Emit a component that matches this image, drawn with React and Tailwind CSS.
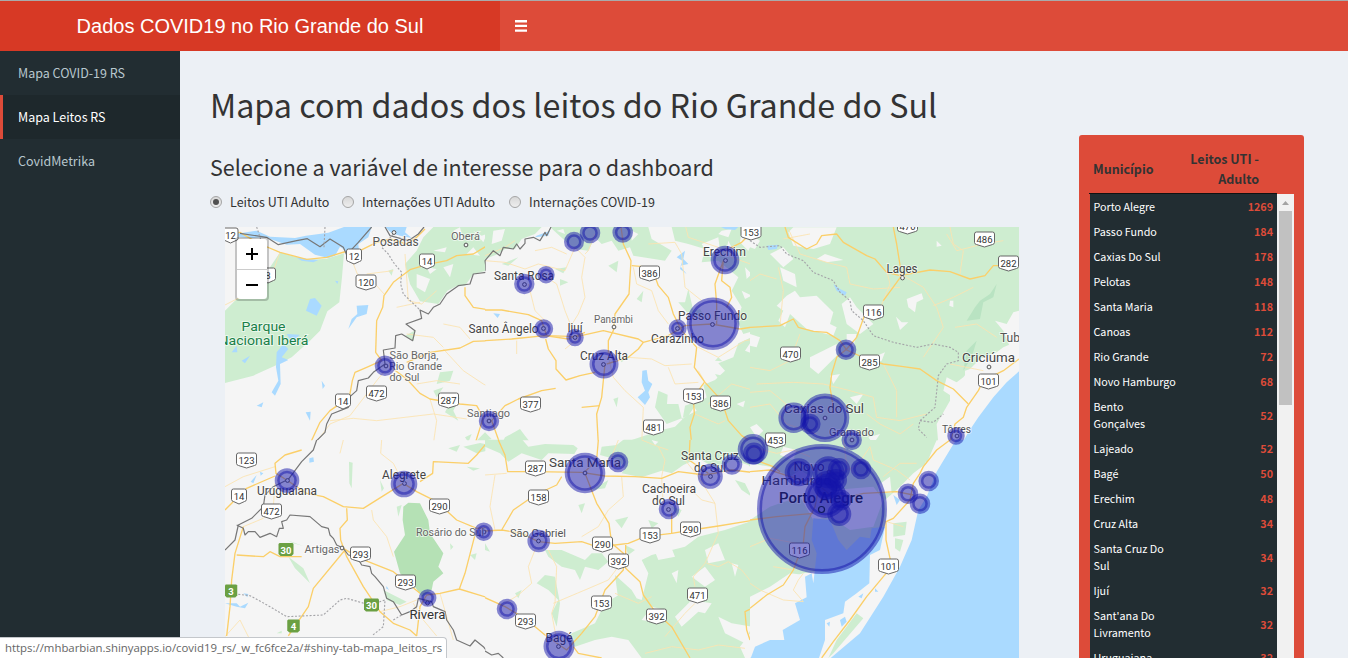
import React from "react";

const municipalities = [
  [["Porto Alegre"], 1269],
  [["Passo Fundo"], 184],
  [["Caxias Do Sul"], 178],
  [["Pelotas"], 148],
  [["Santa Maria"], 118],
  [["Canoas"], 112],
  [["Rio Grande"], 72],
  [["Novo Hamburgo"], 68],
  [["Bento", "Gonçalves"], 52],
  [["Lajeado"], 52],
  [["Bagé"], 50],
  [["Erechim"], 48],
  [["Cruz Alta"], 34],
  [["Santa Cruz Do", "Sul"], 34],
  [["Ijuí"], 32],
  [["Sant'ana Do", "Livramento"], 32],
  [["Uruguaiana"], 32],
];

// Terrain sheets: each one is drawn at three times the map scale.
const sheets = [
  {
    x: 220,
    y: 224,
    park: [
      "M180 85L260 108L320 104L372 88L366 160L358 235L322 262L300 320L270 350L215 400L165 425L100 455L15 477V260L60 215L150 130Z",
      "M640 9H810V98L795 112L798 140L760 150L735 185L710 186L682 200L655 240L600 232L570 180L555 120L590 80L610 40Z",
      "M556 335L587 318L580 352ZM660 445L700 440L690 470L650 480ZM680 555L720 520L700 560L715 590L675 565ZM640 500L670 490L650 520ZM735 640L755 630L745 655ZM765 655L795 625L810 635V660ZM505 140L520 135L515 155Z",
    ],
    land: [
      "M700 20L720 10L730 50L710 45ZM640 80L680 70L675 85ZM740 90L760 70L780 95ZM590 150L630 165L615 205L590 190ZM670 130L700 120L690 160ZM620 130L650 135L630 150ZM760 20L785 35L800 30L790 55Z",
    ],
    water: [
      "M15 20L60 28L110 20L150 38L225 42L258 35L325 26L372 9H455L445 40L415 60L418 90L378 92L370 75L360 68L345 95L325 102L285 92L240 60L200 62L135 40L90 42L50 38L15 28Z",
      "M495 9H560L555 25L575 42L540 35L515 28Z",
      "M228 100L265 105L295 108L280 115L245 110ZM270 225L285 222L305 245L290 275L258 260ZM410 245L445 243L440 270L410 280L385 315L395 285L412 270ZM170 385L190 360L205 375L185 400L205 408L180 420L182 480L165 515L155 505L175 470L168 430ZM65 410L90 395L75 418ZM110 545L130 535L125 550ZM257 565L272 563L270 590ZM305 470L315 485L308 495ZM200 330L240 332L215 355ZM345 170L355 172L352 180ZM35 385L50 365L52 385Z",
    ],
    roads: [
      "M15 30L60 25L120 60L180 85L260 106L320 100L372 84L420 80L470 55L510 45L560 60L590 40L615 15",
      "M810 60L760 90L710 95L680 110L620 122L570 137L520 175L492 215L488 250L470 290L467 385L485 410L440 430L405 445L397 470L388 520L330 560L300 595L270 660",
      "M560 415L630 385L720 372L760 352L810 350",
      "M520 435L560 465L600 508L630 525L720 540L770 545L790 580L765 660",
      "M735 190L735 215L760 250L810 258",
    ],
    tracks: [
      "M400 120L412 150L470 185L492 210M180 85L160 140L100 200L15 243M495 440L470 470L440 510L390 575L330 600L300 640M555 90L565 230L605 240L650 200M330 590L400 583L470 590L640 570L740 585M630 525L650 590L640 660M560 330L640 340L670 370M670 300L720 310L750 345M670 375L730 440L790 480L810 490M530 250L600 235M440 150L520 140M590 480L650 470L720 480",
    ],
    border: [
      "M60 28L140 40L175 62L230 50L262 44L300 68L330 45L370 70L380 92L415 55L455 9",
      "M495 9L510 35L565 50L595 30L612 9",
      "M810 100L795 110L800 145L760 150L750 180L715 185L680 210L660 240L640 250L625 270L600 258L605 283L558 300L585 320L578 350L545 330L527 335L525 372L490 378L495 420L460 445L445 462L415 470L410 500L390 518L385 550L335 570L320 600L315 625L290 650L285 660",
    ],
    dashed: ["M315 9L312 70M110 9L125 55M520 30L485 70L505 90L520 115L545 145L542 180L550 210L600 258"],
  },
  {
    x: 485,
    y: 224,
    park: [
      "M195 9H490L500 45L560 80L540 110L445 95L435 70L400 80L380 50L350 60L330 40L310 80L270 75L240 50Z",
      "M0 9H170L150 30L110 45L90 75L60 75L40 90L0 105Z",
      "M560 9H810V320L775 330L755 290L770 250L740 200L760 160L700 110L650 115L660 75L610 60L570 50Z",
      "M810 335L760 358L745 400L700 418L720 440L690 468L655 483L665 520L625 545L635 560L600 578L570 608L530 618L440 648L430 680H810Z",
      "M520 500L548 512L546 540L580 540L592 590L600 545L640 530L610 575L545 600L510 550ZM610 195L625 260L645 255L660 280L610 270L580 235L600 235Z",
      "M50 120L100 100L70 125ZM210 135L245 130L235 148ZM225 165L250 175L225 185ZM370 125L400 110L395 145ZM455 225L475 200L470 235ZM60 640L105 615L120 635L140 660H50ZM0 625L20 645L0 650ZM400 400L420 405L410 415ZM385 525L400 520L395 550ZM690 450L712 455L700 465ZM690 410L700 400L712 412Z",
    ],
    land: [
      "M650 60L700 40L705 80L670 90ZM770 20L800 60L790 80L765 55ZM730 50L750 90L720 100ZM780 130L800 150L785 165ZM770 200L800 215L780 225ZM710 20L740 15L730 40L700 30ZM780 380L800 350L805 390ZM755 540L780 530L775 550ZM25 20L60 15L50 50L20 60ZM440 20L460 30L440 50ZM215 20L235 15L240 30Z",
    ],
    water: [
      "M575 100L600 80L595 105L610 120L585 125L605 150L585 135L592 110ZM472 440L485 438L490 470L502 480L490 505L495 520L480 543L458 520L480 500L470 475ZM25 268L45 270L38 282ZM708 9H760L750 18L720 15ZM110 75L150 40L190 35L195 20L155 35Z",
    ],
    roads: [
      "M408 9L415 60L438 110L432 210L390 270L385 320L370 350V390",
      "M0 258H50L130 272L170 290L185 335L275 338L355 320L460 345L475 355L550 335L600 305L680 300L765 315L810 308",
      "M0 350L80 345L180 335L250 345L300 325",
      "M475 355L460 375L430 400L365 420M360 420L350 520L335 570L340 660",
      "M440 125L500 130L520 185L550 220L565 270L590 320L635 370L628 430L660 475L710 530L730 590L770 635L810 660",
      "M658 475L625 520L628 570L615 610L620 660",
      "M182 345L190 375L213 410V435L243 468L285 455L330 445M212 493L170 500L100 525L60 545L20 590L45 660M290 550L345 545",
      "M695 300V240L690 180L715 110L710 170L735 190L740 220L725 250M720 80L770 55L800 25",
    ],
    tracks: [
      "M0 110L60 115L120 135L160 120L240 140L270 70L300 100L290 160L300 220L280 270L255 310M185 160L215 180L240 260L260 310M150 80L200 70L245 90M330 30L310 80L300 90M490 60L570 55L590 90L600 190L650 230M445 130L455 180L500 200L520 260L550 300M370 400L385 460L420 500L475 550L470 660M430 400L500 405L540 425L620 420M95 350V390M240 375L290 335M0 95L60 70L90 50M130 180L150 260L190 300M600 0L610 40L700 70L740 100L810 125M640 370L700 400L780 350L810 345M550 430L570 480L640 475M660 475L640 440M670 540L740 480L810 500M630 570L700 600L720 590",
    ],
    border: ["M0 140V110L25 80L45 95L55 70L85 75L95 60L105 75L120 58V45L145 40L165 50L180 25L185 35L198 9"],
    dashed: [],
  },
  {
    x: 750,
    y: 224,
    park: ["M0 9H807V350L760 370L740 385L690 405L660 435L640 460L600 490L600 530L560 600L565 660H0Z"],
    land: [
      "M115 25L130 10H260L240 60L190 75L130 65ZM60 90L100 70L130 105L100 130ZM200 105L225 90L280 108L230 115ZM110 215L135 200L150 220L200 215L250 265L240 300L260 310L250 335L170 315L120 270L105 310L85 290L100 260L80 245ZM90 130L135 150L140 190L100 170ZM275 240L300 220L320 250L370 300L330 330L290 300ZM470 225L515 208L520 225L500 235L495 265L475 250ZM438 278L455 295L475 295L450 318ZM600 230L610 230V250L598 245ZM180 400L260 360L260 395L205 450L180 430ZM0 330L30 340L20 370L0 365ZM560 50L575 65L560 68ZM0 30L30 50L15 75L0 70ZM240 455L270 450L250 480ZM290 330L320 330L310 370L290 350ZM370 400L405 385L395 410L360 420ZM590 460L630 480L610 520L580 500ZM735 290L770 300L790 265L807 260V370L780 370L760 320ZM645 440L690 425L807 375V440L740 500L690 550L640 620L600 660H560L600 590L650 530L680 500L645 490ZM0 610L20 600L40 620L20 640ZM355 640L390 630L370 660ZM300 520L340 510L320 540Z",
    ],
    water: ["M807 442L770 475L730 520L685 580L655 625L635 660H807ZM50 65L85 62L80 75L55 78ZM250 180L270 195L290 205L285 215L260 200Z"],
    roads: [
      "M105 9L115 40L170 75L200 60L215 35L260 30L280 55L350 95L375 105L410 145L450 155L540 138L600 143L660 165L705 155L730 125L807 125",
      "M430 9L440 60L455 155L400 230M345 270L320 340L290 375L260 400L245 450L240 490L250 550",
      "M0 310L90 305L130 285L145 310L190 322L230 325L270 350L290 378L350 405L400 420L460 428L510 435L560 470L610 495L655 540",
      "M807 405L760 440L700 470L685 500L650 550L640 580L615 600L605 640L595 660",
    ],
    tracks: [
      "M115 15L150 90L230 115L290 130L300 180L370 195L450 190M0 170L30 150L80 165M0 430L60 440L120 410L150 330M20 480L130 475L220 480L300 500L370 520L380 580L450 590L530 570M460 155L520 190L560 250L580 310L520 400M615 310L680 300L740 340M550 245L610 220L670 190M90 305L100 200L85 130M410 140L420 180L380 280M0 550L60 540L110 600L200 630M590 30L620 80L700 60L760 50M180 30L100 45M600 9L610 60L640 80L630 150M350 570L390 600L450 630L490 600M400 420L440 500L440 580M700 440L600 420M0 505L60 500L85 520L130 560L200 570",
    ],
    border: [],
    dashed: [
      "M0 50L30 70L90 65L110 90L160 110L190 145L250 170L270 205L300 230L305 260L340 290L370 335L430 355L500 370L550 360L600 370L625 385V410L590 420L565 455L555 550L510 590L505 615L530 640M510 590L550 595L580 570",
    ],
  },
  {
    x: 220,
    y: 440,
    park: [
      "M387 65L398 68L395 145L388 130ZM685 25L720 15L710 35ZM730 20L780 9L810 15V30L770 40ZM530 200L545 195L535 230ZM480 120L492 145L485 155ZM205 350L250 385L270 430L225 385ZM490 450L560 485L540 495L500 480ZM690 310L700 320L692 330ZM750 345L770 340L765 360ZM170 580L185 572V580ZM740 80L780 85L760 92ZM200 300L250 318L220 310ZM800 140L810 135V155Z",
    ],
    land: [],
    water: ["M92 125L110 105L100 130ZM120 95L130 100L122 107ZM268 55L280 52L282 65L268 68ZM70 460L85 462L82 472ZM15 490L50 490L60 500L85 488L75 505L50 500ZM500 438L507 450L498 445Z"],
    roads: [
      "M245 30L195 45L165 70L168 100L200 120L260 160L310 170L370 200L430 205L510 155L550 130L590 155L650 185L710 240L770 265L810 262",
      "M380 205L382 240L360 265L362 300L380 350L430 440L480 515L520 550L570 570L590 588M375 330L280 445L265 500L205 588",
      "M800 9L770 45L745 70L640 65L638 100L600 125M770 265L735 400L718 447L660 460L620 465L600 500L590 588M718 447L810 475M370 325L420 355L520 395L600 460",
      "M165 108L80 145L15 210M70 260L45 340L35 420L30 500L20 588M50 345L130 350L150 335L180 350H245",
    ],
    tracks: [
      "M15 140L70 110L165 80M370 0L360 40M485 0L482 40L520 70L545 120M455 210L460 240L500 290L520 350M70 260L130 235L160 200L165 130M15 590L60 540L90 600M580 490L610 540L650 588M480 515L540 500L590 480M660 460L700 600",
    ],
    border: [
      "M290 0L280 30L245 65L205 118L160 140L135 165L130 200L95 235L55 255L45 300L15 330",
      "M50 255L70 265L75 285L85 275L105 275L120 292L150 280L170 290L178 265L190 265L185 245L200 240L210 225L270 230L305 260L325 265L330 285L340 295L350 315L370 325L385 345L410 350L425 375L450 380L455 400L465 410L490 440L500 475L520 485L545 525L570 515L590 500L595 475L635 485L640 500L675 515L680 540L700 570L710 600L750 618L765 600L790 620L810 645",
    ],
    dashed: ["M55 463L90 467L150 500L200 530L310 525L360 480L380 475L450 495L495 480L490 560L455 588M520 540L545 525"],
  },
  {
    x: 485,
    y: 440,
    park: [
      "M0 -20H95L130 20L180 12L265 15L278 25L268 42L190 40L170 60L110 40L70 65L45 40L0 20Z",
      "M440 -20L395 15L350 20L345 45L400 60L420 85L410 100L470 112L530 92L560 100L595 75L640 55L700 90L740 60L790 75L810 95V-20Z",
      "M180 330H230L300 360L320 340L350 340L370 365L340 390L300 380L285 420L270 390L230 380L190 350ZM155 430L180 405L210 410L225 490L215 560L200 520L220 480L190 450ZM470 360L500 345L600 320L640 290L720 270L810 240V654H470L430 600L380 590L330 600L270 620L240 600L260 580L330 550L360 490L410 460L470 480L490 400ZM390 405L440 450L470 500L490 580L440 560L400 480ZM280 195L300 190L290 220ZM490 240L520 250L500 265ZM390 240L430 230L410 265ZM420 315L450 330L430 345ZM560 200L590 210L580 230ZM90 460L110 450L100 475ZM0 310L15 335L0 330ZM320 150L370 120L360 145ZM750 120L780 130L800 170L770 150Z",
    ],
    land: [
      "M620 410L660 380L690 420L660 440ZM600 500L620 480L680 490L660 520L640 515L590 560L570 530ZM500 500L540 510L530 550L470 540ZM700 530L740 550L800 560L780 610L720 580ZM500 310L550 300L570 350L520 360ZM660 330L700 310L720 360L670 370ZM350 620L400 600L440 654H380ZM765 620L810 560V654H780ZM740 370L760 375L750 410ZM560 400L580 390L575 430ZM500 0L520 5L510 15Z",
    ],
    water: ["M800 630L810 610V654H795Z"],
    roads: [
      "M40 0L60 45L68 95L150 95L290 97L360 108L450 110L530 115L580 95L660 105L740 90L810 98",
      "M230 110L215 135L150 165L85 210L50 270L0 273M50 270L110 280L160 305L210 310L290 305L350 325L390 315L430 310L480 290L560 280L620 270L700 258L810 240",
      "M300 100L335 190L372 250L380 310L415 340L415 390L360 450L330 530L290 580L245 630L180 585L120 535L60 500L0 473",
      "M422 315V385L465 425L475 465L510 515L560 560L615 654M560 220V280M340 0L335 60L300 95M265 620L280 640L350 654M810 500L780 515L785 570L795 600",
      "M615 0L612 60L670 100M800 40L830 70",
    ],
    tracks: [
      "M0 105L65 100M30 105L15 200L30 270M400 0L380 50L350 70M410 110L415 170L370 210L340 260L290 290M530 110L535 200M620 150L650 180L690 190L700 280L660 370L625 410L630 440M600 60L640 110L690 190M150 330L130 380L140 430L100 465L60 490M190 330L215 380L210 490L200 520L215 600M205 490L300 450L370 420L400 380M390 460L460 490L500 470M665 370L700 380L730 365L770 390L810 440M480 640L560 620L640 630L700 615L780 625M540 590L600 520L630 490M470 0L520 20L540 60L530 110M520 20L550 30",
    ],
    border: ["M0 633L20 645L40 640L55 654"],
    dashed: [],
  },
  {
    x: 750,
    y: 440,
    park: ["M0 0H560L530 70L490 100L450 140L405 180L410 260L330 340L240 390L160 400L100 420L0 480Z", "M15 515L45 520L65 560L55 600L40 555L15 540Z"],
    land: [
      "M525 65L550 70L545 90ZM385 135L420 110L425 160L385 155ZM100 20L140 30L130 60L90 45ZM0 70L60 80L120 110L150 90L250 150L370 140L400 180L370 260L300 270L240 230L190 240L150 170L90 190L60 200L0 240ZM0 470L60 440L120 400L165 405L175 470L135 480L150 540L100 565V600H60L0 654Z",
      "M590 15L555 50L530 90L500 140L440 160L410 210L400 290L390 350L360 340L355 430L290 485L275 540L225 530L230 600L215 654H240L330 580L400 470L445 390L470 330L495 240L510 170L560 90L615 10Z",
    ],
    water: [
      "M620 -4L560 95L530 170L505 210L485 300L450 380L400 470L330 580L235 660H807V-4Z",
      "M190 235L240 240L265 300L290 330L330 290L360 295L365 265L405 260L390 330L360 345L358 430L320 460L285 485L280 520L225 540L225 600L205 660H0L15 620L60 600H103L98 570L150 540L135 490L170 472L165 410L185 400L190 430L200 340L185 300ZM270 540L285 530L290 545L275 560ZM325 470L340 460L335 475ZM230 550L240 545L238 560ZM375 445L385 455H375ZM430 165L450 180L440 195Z",
    ],
    roads: [
      "M600 0L560 30L520 80L510 100L490 130L480 180L430 235L408 245V300L420 355L430 375L400 410L350 470L300 540L250 605L215 654",
      "M0 95L60 90L120 110L200 130L240 165L300 170L340 160L440 155L490 165M0 240L80 230L190 220M215 100L195 200L165 260L160 310L130 390L100 435L50 465L0 505",
      "M30 65L70 80L90 95",
    ],
    tracks: ["M0 20L80 40L130 30L180 50M250 100L320 80L360 20L370 60L440 90L480 120M0 320L60 295L140 310M0 430L30 450L100 480L160 485L130 450L145 420L160 400M410 245L460 260M70 380L130 390M280 0L290 70L310 100M400 110L450 70L500 70"],
    border: [],
    dashed: [],
  },
];

const shields = [
  [230.5, 235, "12"], [354, 256, "12"], [268, 275, "8"], [427, 261, "14"], [366, 282, "120"],
  [343, 401, "14"], [376.5, 393, "472"], [448.5, 400, "287"], [649.5, 273, "386"], [530.5, 404, "377"],
  [693.5, 396, "153"], [720.5, 403, "386"], [653.5, 427, "481"], [751, 232, "153"], [984.5, 239, "486"],
  [1008.5, 263, "282"], [873.5, 312, "116"], [790.5, 354, "470"], [869.5, 362, "285"], [988.5, 381, "101"],
  [907.5, 226, "470"], [775.5, 440, "453"], [246.5, 460, "123"], [239, 496, "14"], [271.5, 511, "472"],
  [439.5, 506, "290"], [360.5, 554, "293"], [405.5, 582, "293"], [535.5, 468, "287"], [538.5, 497, "158"],
  [602.5, 544, "290"], [618.5, 561, "392"], [650, 535, "153"], [690.5, 529, "290"], [601.5, 603, "153"],
  [656.5, 616, "392"], [525.5, 621, "293"], [697.5, 595, "471"], [799.5, 550, "116"], [888.5, 566, "101"],
];

const greenShields = [[286, 550, "30"], [231, 591.5, "3"], [371.5, 605.5, "30"], [293.5, 626.5, "4"]];

// x, baseline, text, size, colour, measured width, weight
const labels = [
  [395.5, 246, "Posadas", 12, "#555", 46],
  [465.5, 240, "Oberá", 10.5, "#666", 29],
  [524, 279.5, "Santa Rosa", 12, "#444", 60],
  [503.5, 333, "Santo Ângelo", 12, "#444", 70],
  [575, 332, "Ijuí", 12, "#444", 15],
  [613.5, 322.5, "Panambi", 10.5, "#666", 39],
  [677.5, 342.5, "Carazinho", 12, "#444", 53],
  [604, 359.5, "Cruz Alta", 12, "#444", 48],
  [712.5, 319.5, "Passo Fundo", 12, "#444", 69],
  [724.5, 255.5, "Erechim", 12, "#444", 43],
  [902, 273, "Lages", 12, "#444", 31],
  [1010, 342, "Tub", 12, "#555", 20],
  [988.5, 362, "Criciúma", 13.5, "#444", 53],
  [824, 413, "Caxias do Sul", 13.5, "#444", 80],
  [851.5, 436, "Gramado", 11.5, "#555", 45],
  [956.5, 433, "Tôrres", 11, "#555", 29],
  [488.5, 417, "Santiago", 11.5, "#666", 43],
  [414, 359, "São Borja,", 11, "#666", 49],
  [415.5, 370, "Rio Grande", 11, "#666", 53],
  [404.5, 381, "do Sul", 11, "#666", 30],
  [287, 494.5, "Uruguaiana", 12, "#444", 60],
  [404, 478.5, "Alegrete", 12, "#444", 44],
  [450, 536, "Rosário do Sul", 11, "#666", 68],
  [322, 553, "Artigas", 11.5, "#666", 35],
  [427.5, 619, "Rivera", 13, "#333", 36],
  [585, 467, "Santa Maria", 13.5, "#444", 72],
  [538, 537, "São Gabriel", 11, "#555", 56],
  [710, 459.5, "Santa Cruz", 12, "#444", 58],
  [710, 471.5, "do Sul", 12, "#444", 32],
  [669, 492.5, "Cachoeira", 12, "#444", 54],
  [668.5, 504.5, "do Sul", 12, "#444", 33],
  [559, 641.5, "Bagé", 12, "#444", 27],
  [809, 470.5, "Novo", 13, "#444", 31],
  [796.5, 485, "Hamburgo", 13, "#444", 70],
  [821, 503, "Porto Alegre", 14.5, "#222", 84, 500],
  [263.5, 331, "Parque", 13.5, "#188048", 44],
  [263.5, 345, "Nacional Iberá", 13.5, "#188048", 90],
];

const towns = [
  [394, 232.5], [466, 245], [614, 327], [902.5, 278], [989, 367], [342, 548], [427.5, 603],
  [524.5, 284.5], [543.5, 328.5], [575, 337.5], [603.5, 364.5], [677.5, 328.5], [712.5, 324.5], [725.5, 260.5],
  [386, 366], [825, 418], [852, 440], [957, 436], [489, 421], [287.5, 480.5], [404.5, 483.5], [484, 532],
  [585, 473], [710.5, 476.5], [668.5, 509.5], [538.5, 541], [558.5, 646.5], [829, 472],
];

const markers = [
  [822, 509, 65], [713, 323.7, 26.3], [825, 417.7, 24.3], [825.5, 497, 21], [585, 473, 20.3],
  [828.3, 472.3, 16], [559, 646.3, 15.5], [793.7, 417.7, 15.3], [753, 449.3, 15.3], [604, 364, 14.5],
  [725, 260, 14.3], [798.7, 472.3, 14], [404, 484, 13.3], [827, 485, 14], [710.3, 476.3, 12.5],
  [287, 480.5, 12.3], [839.3, 514, 12], [538.7, 541, 11.3], [754, 453.5, 11], [839, 469, 11],
  [836, 480, 11], [841, 500, 10.5], [846, 349.7, 10.3], [574, 241.7, 10], [590, 233, 10.3],
  [622.7, 232.5, 10.3], [524.3, 284, 10.2], [385, 365.7, 10.3], [489, 421, 10.2], [810.3, 424, 10.3],
  [851.7, 440, 10.2], [618, 462, 10.3], [732, 464.5, 10.3], [669, 509, 10.3], [507, 609, 10.3],
  [861, 469, 10.3], [908, 493.7, 10.3], [920, 503.7, 10.3], [928.7, 481, 10.3], [826, 489, 11],
  [543.7, 328.7, 9.5], [483.7, 531.7, 9.3], [677.7, 328.3, 9], [546, 274.7, 8.7], [575, 337.5, 8.7],
  [956, 436, 8.7], [427.7, 598, 8.7],
];

function Paths({ list, ...style }) {
  return list.map((d, i) => <path key={i} d={d} {...style} />);
}

function MapDrawing() {
  return (
    <svg className="block h-[431px] w-[794px]" viewBox="225 227 794 431" fontFamily="Roboto, sans-serif">
      <rect x="225" y="227" width="794" height="431" fill="#f5f5f5" />
      <defs>
        {sheets.map((s, i) => (
          <clipPath key={i} id={"sheet" + i}>
            <rect y={i > 2 ? -1 : 0} width={i % 3 === 2 ? 807 : 796} height={i > 2 ? 661 : 649} />
          </clipPath>
        ))}
      </defs>
      {sheets.map((s, i) => (
        <g key={i} transform={"translate(" + s.x + " " + s.y + ") scale(.33333)"} clipPath={"url(#sheet" + i + ")"} strokeLinejoin="round">
          <Paths list={s.park} fill="#ceedd0" />
          {i === 3 && <path d="M550 200L565 188L600 190L625 240L630 280L670 340L655 380L670 400L640 425L635 450L605 470L585 440L540 400L522 335L555 285L548 240Z" fill="#b5e1b5" />}
          <Paths list={s.land} fill="#f5f5f5" />
          {i === 2 && <path d="M740 180L730 220L700 235L690 285L650 290L675 250L690 230L720 210ZM680 350L665 400L640 440L650 380Z" fill="#b9e3c2" />}
          <Paths list={s.water} fill="#aadaff" />
          {i === 5 && <path d="M320 520L340 535L250 640L235 654L260 600ZM430 250L470 245L465 285L430 290ZM435 295L460 300L450 335L435 325Z" fill="#ceedd0" />}
          <Paths list={s.tracks} fill="none" stroke="#fbe3b0" strokeWidth="2.6" />
          <Paths list={s.roads} fill="none" stroke="#fbcf69" strokeWidth="4" />
          <Paths list={s.border} fill="none" stroke="#777" strokeWidth="3.6" />
          <Paths list={s.dashed} fill="none" stroke="#a4a4a8" strokeWidth="3.4" strokeDasharray="6 5" />
        </g>
      ))}
      {shields.map(([x, y, n], i) => {
        const w = n.length > 2 ? 20 : 15;
        return (
          <g key={i} transform={"translate(" + (x - w / 2) + " " + (y - 7.5) + ")"}>
            <path d={"M2 .5H" + (w - 2) + "Q" + w + " .5 " + w + " 2.5V11Q" + w + " 12.5 " + (w - 2) + " 13L" + w / 2 + " 15.5L2 13Q0 12.5 0 11V2.5Q0 .5 2 .5Z"} fill="#fff" stroke="#666" strokeWidth="1" />
            <text x={w / 2} y="11.2" textAnchor="middle" fontSize="9.5" fill="#333">{n}</text>
          </g>
        );
      })}
      {greenShields.map(([x, y, n], i) => {
        const w = n.length > 1 ? 15 : 12.5;
        return (
          <g key={i} transform={"translate(" + (x - w / 2) + " " + (y - 7) + ")"}>
            <path d={"M1 0H" + (w - 1) + "L" + w + " 1V11L" + (w - 2) + " 13H2L0 11V1Z"} fill="#6ba043" />
            <text x={w / 2} y="10.5" textAnchor="middle" fontSize="9.5" fontWeight="700" fill="#fff">{n}</text>
          </g>
        );
      })}
      {towns.map(([x, y], i) => <circle key={i} cx={x} cy={y} r="1.9" fill="#f5f5f5" stroke="#555" />)}
      {labels.map(([x, y, t, size, color, w, weight], i) => (
        <text key={i} x={x - w / 2} y={y} fontSize={size} fill={color} fontWeight={weight || 400} textLength={w} lengthAdjust="spacingAndGlyphs" stroke="#fff" strokeOpacity=".6" strokeWidth="1.8" paintOrder="stroke">{t}</text>
      ))}
      {markers.map(([x, y, r], i) => (
        <circle key={i} cx={x} cy={y} r={r - 2.5} fill="#1414aa" fillOpacity=".5" stroke="#1414aa" strokeOpacity=".5" strokeWidth="5" />
      ))}
      <circle cx="821.5" cy="509.5" r="3" fill="none" stroke="#111a60" strokeWidth="1.2" />
    </svg>
  );
}

function Radio({ checked, label, className }) {
  return (
    <label className={"flex items-center " + className}>
      <span className="flex size-3 items-center justify-center rounded-full border border-[#a5a5a5] bg-linear-to-b from-[#d8d8d8] to-[#eeeeee]">
        {checked && <span className="size-1.5 rounded-full bg-[#505050]" />}
      </span>
      <span className="ml-2 whitespace-nowrap">{label}</span>
    </label>
  );
}

export default function App() {
  return (
    <div className="relative flex h-[658px] w-[1348px] flex-col overflow-hidden bg-[#ecf0f5] font-['Noto_Sans_CJK_SC',sans-serif] text-[#333]">
      <header className="flex h-[51px] shrink-0 border-t border-[#a9aaab] bg-[#dd4b39] text-white">
        <div className="flex w-[500px] items-center justify-center bg-[#d73925] font-['Liberation_Sans',sans-serif] text-xl">
          <span>Dados COVID19 no Rio Grande do Sul</span>
        </div>
        <div className="flex items-center pl-[15px]">
          <svg className="size-3" viewBox="0 0 12 12" fill="#fff">
            <path d="M0 0h12v2.400H0zM0 4.700h12v2.400H0zM0 9.400h12v2.400H0z" />
          </svg>
        </div>
      </header>
      <div className="flex min-h-0 flex-1">
        <nav className="flex w-[180px] shrink-0 flex-col bg-[#222d32] text-[12.5px] text-[#b8c7ce]">
          <a className="flex h-11 items-center border-l-3 border-transparent pl-[15px]">Mapa COVID-19 RS</a>
          <a className="flex h-11 items-center border-l-3 border-[#dd4b39] bg-[#1e282c] pl-[15px] text-white">Mapa Leitos RS</a>
          <a className="flex h-11 items-center border-l-3 border-transparent pl-[15px]">CovidMetrika</a>
        </nav>
        <main className="w-[899px] shrink-0 pl-[30px]">
          <h1 className="mt-[33px] text-[32.25px] leading-10 whitespace-nowrap">Mapa com dados dos leitos do Rio Grande do Sul</h1>
          <h3 className="mt-[30px] text-[21.5px] leading-[26px] whitespace-nowrap">Selecione a variável de interesse para o dashboard</h3>
          <div className="mt-[12px] flex h-5 text-[12.5px]">
            <Radio checked label="Leitos UTI Adulto" className="w-[132px]" />
            <Radio label="Internações UTI Adulto" className="w-[167px]" />
            <Radio label="Internações COVID-19" className="" />
          </div>
          <div className="relative mt-[15px] ml-[15px] h-[431px] w-[794px] overflow-hidden">
            <MapDrawing />
            <div className="absolute top-[10px] left-[10px] flex w-[34px] flex-col rounded border-2 border-black/20 bg-clip-padding">
              <button className="flex h-[31px] items-center justify-center rounded-t-sm border-b border-[#ccc] bg-white">
                <svg className="size-3" viewBox="0 0 12 12"><path d="M0 6H12M6 0V12" stroke="#000" strokeWidth="2" /></svg>
              </button>
              <button className="flex h-[29px] items-center justify-center rounded-b-sm bg-white">
                <svg className="size-3" viewBox="0 0 12 12"><path d="M0 6H12" stroke="#000" strokeWidth="2" /></svg>
              </button>
            </div>
          </div>
        </main>
        <aside className="mt-[84px] flex h-[523px] w-[225px] flex-col overflow-hidden rounded-t-[3px] bg-[#dd4b39] px-2.5 pt-3">
          <div className="mr-[17px] flex h-[47px] items-center justify-between border-b border-[#111] pr-[18px] pb-[2px] pl-[4px] text-[12.5px] leading-5 font-bold">
            <span>Município</span>
            <span className="text-right">Leitos UTI -<br />Adulto</span>
          </div>
          <div className="flex min-h-0 flex-1">
            <div className="ml-px w-[187px] overflow-hidden bg-[#222d32] text-[10.75px] leading-[17px] text-white">
              {municipalities.map(([lines, beds]) => (
                <div key={lines[0]} className="flex items-center justify-between py-1 pr-1 pl-[3.5px]">
                  <span>{lines.map((l) => <span key={l} className="block">{l}</span>)}</span>
                  <span className="font-bold text-[#dd4b39]">{beds}</span>
                </div>
              ))}
            </div>
            <div className="flex w-[17px] flex-col items-center bg-[#f1f1f1]">
              <svg className="h-[17px] w-[17px] shrink-0" viewBox="0 0 17 17"><path d="M5 11L8.500 7L12 11Z" fill="#a3a3a3" /></svg>
              <div className="h-[194px] w-[13px] bg-[#c1c1c1]" />
            </div>
          </div>
        </aside>
      </div>
      <div className="absolute bottom-0 left-0 flex h-[21px] w-[447px] items-center rounded-tr border-t border-r border-[#c4c7cb] bg-white pl-[5px] font-['Open_Sans',sans-serif] text-[11.4px] whitespace-nowrap text-[#666]">
        https://mhbarbian.shinyapps.io/covid19_rs/_w_fc6fce2a/#shiny-tab-mapa_leitos_rs
      </div>
    </div>
  );
}
